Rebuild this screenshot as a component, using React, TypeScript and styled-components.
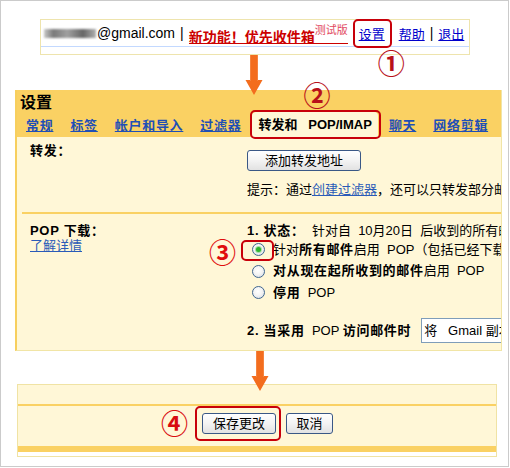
import React from "react";
import styled, { createGlobalStyle, css } from "styled-components";

const Global = createGlobalStyle`
  html, body { margin: 0; padding: 0; background: #fff; }
  body {
    font-family: "Liberation Sans", "Noto Sans CJK SC", sans-serif;
    font-size: 13px;
    color: #000;
  }
`;

const RED = "#c8000a";
const YELLOW = "#fad163";
const CREAM = "#fff7d7";

const Frame = styled.div`
  position: relative;
  box-sizing: border-box;
  width: 509px;
  height: 467px;
  border: 1px solid #cbcbcb;
  background: #fff;
  overflow: hidden;
`;

/* ---------- annotations ---------- */
const Anno = styled.span`
  position: relative;
  display: inline-block;
`;

const Ring = styled.span<{ $t: number; $r: number; $b: number; $l: number }>`
  position: absolute;
  top: ${(p) => p.$t}px;
  right: ${(p) => p.$r}px;
  bottom: ${(p) => p.$b}px;
  left: ${(p) => p.$l}px;
  border: 2px solid ${RED};
  border-radius: 5px;
  pointer-events: none;
`;

const Badge = styled.span<{ $x: number; $y: number; $c?: string }>`
  position: absolute;
  left: ${(p) => p.$x}px;
  top: ${(p) => p.$y}px;
  width: 23px;
  height: 23px;
  display: flex;
  align-items: center;
  justify-content: center;
  font-family: "Noto Sans CJK SC", "DejaVu Sans", sans-serif;
  font-size: 27px;
  line-height: 1;
  font-weight: bold;
  color: ${(p) => p.$c || "#b8101a"};
  z-index: 6;
  white-space: nowrap;
`;

const ArrowSlot = styled.div<{ $x: number; $h: number }>`
  height: ${(p) => p.$h}px;
  padding-left: ${(p) => p.$x}px;
  svg {
    display: block;
    position: relative;
    z-index: 5;
  }
`;

const Arrow = () => (
  <svg width="18" height="40" viewBox="0 0 18 40">
    <path d="M5 0h8v25h4.5L9 40 0.5 25H5z" fill="#f36d1e" />
    <path d="M5.5 0.5v25M12.5 0.5v25" stroke="#f79a5e" strokeWidth="1" strokeDasharray="1 1" />
  </svg>
);

/* ---------- top account bar ---------- */
const TopBar = styled.div`
  box-sizing: border-box;
  margin: 18px 0 0 39px;
  width: 430px;
  border: 1px solid #eee4ad;
`;

const TopRow = styled.div`
  height: 26px;
  display: flex;
  align-items: center;
  padding-left: 3px;
  white-space: nowrap;
  font-size: 14px;
`;

const BlueRule = styled.div`
  height: 1px;
  background: #c3d9ff;
  margin-bottom: 7px;
`;

const Blurred = styled.span`
  display: inline-block;
  width: 52px;
  height: 9px;
  margin-right: 1px;
  background: linear-gradient(90deg, #c8c8c8, #7a7a7a 18%, #a0a0a0 45%, #666 75%, #b0b0b0);
  filter: blur(1.2px);
`;

const Email = styled.span`
  font-size: 14px;
`;

const Sep = styled.span`
  margin: 0 5px;
`;

const Feature = styled.a`
  color: #cc0000;
  font-weight: bold;
  text-decoration: none;
  background: linear-gradient(#cc0000, #cc0000) no-repeat 0 calc(100% - 2px) / 100% 1px;
`;

const Beta = styled.span`
  font-size: 11px;
  font-weight: normal;
  color: #e24a60;
  vertical-align: 8px;
`;

const TopLink = styled.a`
  font-size: 13px;
  color: #0000cc;
  text-decoration: underline;
`;

const TopAnno = styled(Anno)`
  margin: 0 14px 0 11px;
`;

/* ---------- settings panel ---------- */
const Panel = styled.div`
  position: relative;
  box-sizing: border-box;
  margin-left: 14px;
  width: 487px;
  border-left: 2px solid #f7cf5e;
  border-right: 1px solid #f1e5a6;
  border-bottom: 1px solid #f1e5a6;
`;

const Header = styled.div`
  background: ${YELLOW};
  padding: 3px 0 0 3px;
`;

const Title = styled.div`
  font-size: 16px;
  line-height: 19px;
  font-weight: bold;
`;

const Tabs = styled.div`
  display: flex;
  align-items: center;
  height: 25px;
  padding-left: 6px;
  white-space: nowrap;
`;

const Tab = styled.a`
  font-weight: bold;
  letter-spacing: 0.7px;
  color: #1f4fb6;
  text-decoration: underline;
  margin-right: 17px;
`;

const ActiveTab = styled.span`
  position: relative;
  height: 25px;
  line-height: 25px;
  padding: 0 6px;
  margin: 0 11px 0 -6px;
  background: ${CREAM};
  border-radius: 4px 4px 0 0;
  font-weight: bold;
  align-self: flex-end;
`;

const Body = styled.div`
  background: ${CREAM};
  overflow: hidden;
  white-space: nowrap;
`;

const Row = styled.div<{ $pt: number; $pb: number }>`
  display: grid;
  grid-template-columns: 217px 1fr;
  padding: ${(p) => p.$pt}px 0 ${(p) => p.$pb}px 13px;
  line-height: 16px;
`;

const Label = styled.div`
  font-weight: bold;
  letter-spacing: 0.7px;
  line-height: 15px;
`;

const PopLabel = styled.div`
  line-height: 15px;
`;

const InlineLink = styled.a<{ $block?: boolean }>`
  color: #2a5bb8;
  text-decoration: underline;
  ${(p) =>
    p.$block &&
    css`
      display: block;
      width: max-content;
    `}
`;

const ForwardCol = styled.div`
  display: flex;
  flex-direction: column;
  align-items: flex-start;
  gap: 11px;
  padding-top: 7px;
  min-width: 0;
`;

const Button = styled.button<{ $pad: number }>`
  box-sizing: border-box;
  height: 21px;
  padding: 0 ${(p) => p.$pad}px;
  border: 1px solid #3a5886;
  border-radius: 3px;
  background: linear-gradient(#ffffff, #f3f3f3 50%, #e2e2e2);
  font: inherit;
  font-size: 13px;
  line-height: 19px;
  color: #000;
  white-space: nowrap;
  cursor: pointer;
`;

const Hint = styled.div`
  line-height: 16px;
`;

const Divider = styled.div`
  height: 2px;
  margin-left: 5px;
  background: ${YELLOW};
`;

const PopCol = styled.div`
  display: flex;
  flex-direction: column;
  min-width: 0;
`;

const Status = styled.div`
  height: 16px;
  line-height: 16px;
`;

const B = styled.b`
  letter-spacing: 0.7px;
`;

const Option = styled.div`
  display: flex;
  align-items: center;
  height: 21.5px;
`;

const RadioAnno = styled(Anno)`
  margin: 0 8px 0 5px;
  width: 13px;
  height: 13px;
`;

const Radio = styled.span<{ $on?: boolean }>`
  position: relative;
  display: block;
  box-sizing: border-box;
  width: 13px;
  height: 13px;
  border-radius: 50%;
  border: 1px solid #3f6690;
  background: radial-gradient(circle at 45% 40%, #ffffff 0%, #f4f4f4 45%, #d0d7e0 100%);
  ${(p) =>
    p.$on &&
    css`
      &::after {
        content: "";
        position: absolute;
        left: 3px;
        top: 3px;
        width: 5px;
        height: 5px;
        border-radius: 50%;
        background: #2fb52f;
        box-shadow: 0 0 0 1px #a6dea6;
      }
    `}
`;

const AccessRow = styled.div`
  display: flex;
  align-items: center;
  height: 25px;
  margin-top: 14.5px;
`;

const FakeSelect = styled.span`
  box-sizing: border-box;
  display: inline-flex;
  align-items: center;
  height: 25px;
  width: 220px;
  margin-left: 10px;
  padding-left: 2px;
  border: 1px solid #7f9db9;
  background: #fff;
  font-size: 13px;
`;

/* ---------- save bar ---------- */
const SaveBox = styled.div`
  box-sizing: border-box;
  margin-left: 16px;
  width: 480px;
  height: 73px;
  border: 1px solid #f0e3a4;
  background: #fff;
`;

const SaveHead = styled.div`
  height: 19px;
  background: ${CREAM};
`;

const SaveBar = styled.div`
  height: 33px;
  background: ${CREAM};
  border-top: 2px solid ${YELLOW};
  border-bottom: 6px solid ${YELLOW};
  display: flex;
  align-items: flex-start;
  gap: 10px;
  padding: 7px 0 0 184px;
  box-sizing: content-box;
`;

const SaveAnno = styled(Anno)`
  display: block;
`;

export default function App() {
  const sp2 = "\u00a0\u00a0";
  return (
    <>
      <Global />
      <Frame>
        <TopBar>
          <TopRow>
            <Blurred />
            <Email>@gmail.com</Email>
            <Sep>|</Sep>
            <Feature href="#">
              新功能！优先收件箱<Beta>测试版</Beta>
            </Feature>
            <TopAnno>
              <TopLink href="#">设置</TopLink>
              <Ring $t={-5} $r={-7} $b={-5} $l={-6} />
              <Badge $x={21} $y={27}>①</Badge>
            </TopAnno>
            <TopLink href="#">帮助</TopLink>
            <Sep>|</Sep>
            <TopLink href="#">退出</TopLink>
          </TopRow>
          <BlueRule />
        </TopBar>

        <ArrowSlot $x={244} $h={35}>
          <Arrow />
        </ArrowSlot>

        <Panel>
          <Header>
            <Title>设置</Title>
            <Tabs>
              <Tab href="#">常规</Tab>
              <Tab href="#">标签</Tab>
              <Tab href="#">帐户和导入</Tab>
              <Tab href="#">过滤器</Tab>
              <ActiveTab>
                转发和{"\u00a0\u00a0\u00a0"}POP/IMAP
                <Ring $t={-2} $r={-3} $b={-2} $l={-2} />
                <Badge $x={53} $y={-29}>②</Badge>
              </ActiveTab>
              <Tab href="#">聊天</Tab>
              <Tab href="#">网络剪辑</Tab>
            </Tabs>
          </Header>

          <Body>
            <Row $pt={6} $pb={14}>
              <Label>转发：</Label>
              <ForwardCol>
                <Button $pad={17}>添加转发地址</Button>
                <Hint>
                  提示：通过<InlineLink href="#">创建过滤器</InlineLink>，还可以只转发部分邮件。
                </Hint>
              </ForwardCol>
            </Row>
            <Divider />
            <Row $pt={9} $pb={7}>
              <PopLabel>
                <Label>POP 下载：</Label>
                <InlineLink $block href="#">
                  了解详情
                </InlineLink>
              </PopLabel>
              <PopCol>
                <Status>
                  <B>1. 状态：</B>
                  {sp2}针对自{sp2}10月20日{sp2}后收到的所有邮件启用了 POP
                </Status>
                <Option>
                  <RadioAnno>
                    <Radio $on />
                    <Ring $t={-3} $r={-9} $b={-5} $l={-11} />
                    <Badge $x={-41} $y={-3} $c="#e00c0c">③</Badge>
                  </RadioAnno>
                  <span>
                    针对<B>所有邮件</B>启用{sp2}POP（包括已经下载的邮件）
                  </span>
                </Option>
                <Option>
                  <RadioAnno>
                    <Radio />
                  </RadioAnno>
                  <span>
                    <B>对从现在起所收到的邮件</B>启用{sp2}POP
                  </span>
                </Option>
                <Option>
                  <RadioAnno>
                    <Radio />
                  </RadioAnno>
                  <span>
                    <B>停用</B>
                    {sp2}POP
                  </span>
                </Option>
                <AccessRow>
                  <span>
                    <B>2. 当采用</B>
                    {sp2}POP <B>访问邮件时</B>
                  </span>
                  <FakeSelect>将{sp2} Gmail 副本保留在收件箱中</FakeSelect>
                </AccessRow>
              </PopCol>
            </Row>
          </Body>
        </Panel>

        <ArrowSlot $x={250} $h={33}>
          <Arrow />
        </ArrowSlot>

        <SaveBox>
          <SaveHead />
          <SaveBar>
            <SaveAnno>
              <Button $pad={10}>保存更改</Button>
              <Ring $t={-7} $r={-5} $b={-7} $l={-7} />
              <Badge $x={-39} $y={-2} $c="#d80c10">④</Badge>
            </SaveAnno>
            <Button $pad={9.5}>取消</Button>
          </SaveBar>
        </SaveBox>
      </Frame>
    </>
  );
}
